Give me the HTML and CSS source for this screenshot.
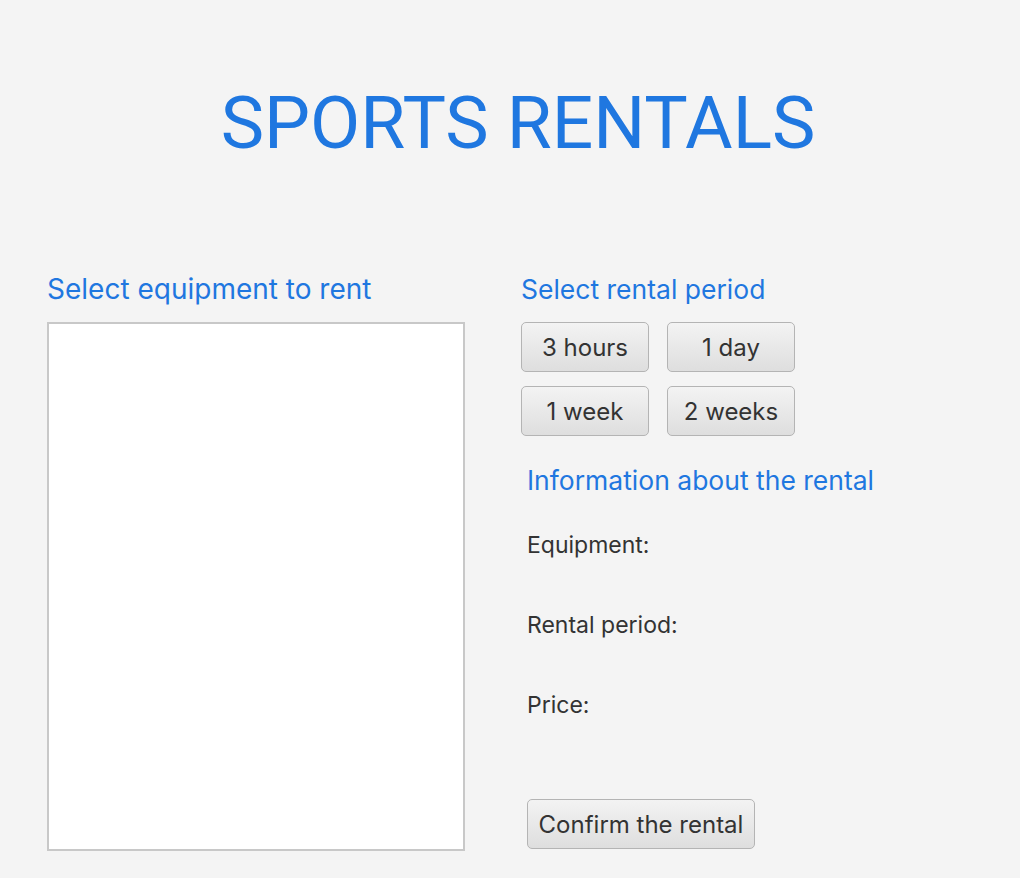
FILE: index.html
```html
<!DOCTYPE html>
<html>
<head>
<meta charset="utf-8">
<link rel="stylesheet" href="styles.css">
</head>
<body>
<h1 class="title">SPORTS RENTALS</h1>
<div class="main">
  <div class="left">
    <div class="heading">Select equipment to rent</div>
    <div class="list"></div>
  </div>
  <div class="right">
    <div class="heading">Select rental period</div>
    <div class="periods">
      <button class="btn period">3 hours</button>
      <button class="btn period">1 day</button>
      <button class="btn period">1 week</button>
      <button class="btn period">2 weeks</button>
    </div>
    <div class="info">
      <div class="heading">Information about the rental</div>
      <div class="field">Equipment:</div>
      <div class="field">Rental period:</div>
      <div class="field">Price:</div>
      <button class="btn confirm">Confirm the rental</button>
    </div>
  </div>
</div>
</body>
</html>
```
FILE: styles.css
```css
html, body {
  margin: 0;
  padding: 0;
  background: #f4f4f4;
  font-family: Inter, "Noto Sans", sans-serif;
}
.title {
  margin: 0;
  padding-top: 80px;
  text-align: center;
  font-family: Roboto, Inter, sans-serif;
  font-size: 73px;
  font-weight: 400;
  line-height: 87px;
  color: #1f77e0;
  padding-left: 16px;
}
.main {
  display: flex;
  padding-left: 47px;
  padding-top: 105px;
}
.left {
  width: 418px;
  display: flex;
  flex-direction: column;
}
.heading {
  font-size: 28px;
  line-height: 34px;
  color: #1f77e0;
  height: 40px;
}
.right .heading {
  font-size: 26.5px;
}
.list {
  margin-top: 10px;
  width: 414px;
  height: 525px;
  background: #fff;
  border: 2px solid #c8c8c8;
}
.right {
  margin-left: 56px;
  display: flex;
  flex-direction: column;
}
.periods {
  display: grid;
  grid-template-columns: 128px 128px;
  column-gap: 18px;
  row-gap: 14px;
  margin-top: 10px;
}
.btn {
  font-family: Inter, "Noto Sans", sans-serif;
  font-size: 24px;
  color: #333;
  height: 50px;
  border: 1px solid #b4b4b4;
  border-radius: 5px;
  background: linear-gradient(#f3f3f3, #dedede);
  padding: 0;
}
.info {
  margin-left: 6px;
  margin-top: 27px;
  display: flex;
  flex-direction: column;
  align-items: flex-start;
}
.field {
  font-size: 23px;
  color: #333;
  line-height: 28px;
  height: 80px;
}
.info .heading {
  height: 68px;
}
.confirm {
  margin-top: 28px;
  width: 228px;
}
```
